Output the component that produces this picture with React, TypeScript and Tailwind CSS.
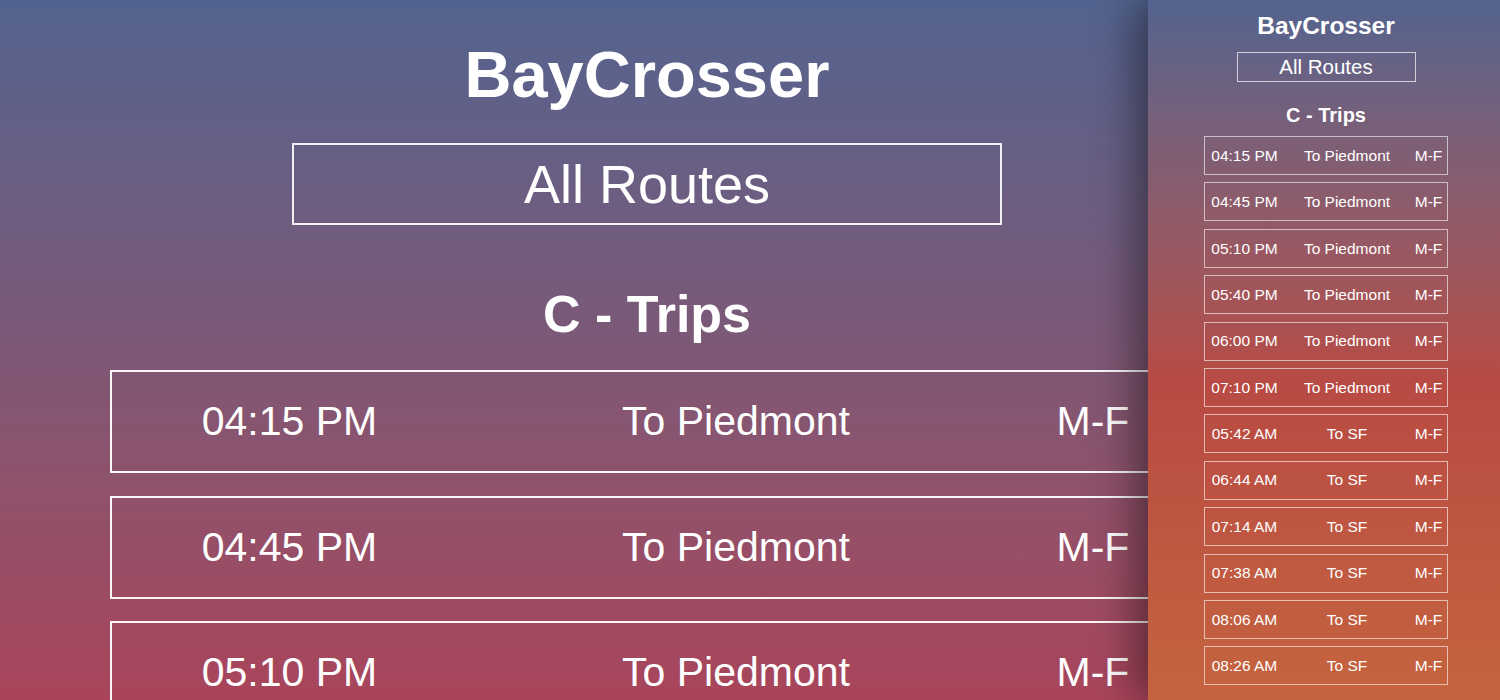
// BayCrosser trip list: wide view with a narrow preview panel on the right
import React from 'react';

type Trip = { time: string; dest: string; days: string };

const trips: Trip[] = [
  { time: '04:15 PM', dest: 'To Piedmont', days: 'M-F' },
  { time: '04:45 PM', dest: 'To Piedmont', days: 'M-F' },
  { time: '05:10 PM', dest: 'To Piedmont', days: 'M-F' },
  { time: '05:40 PM', dest: 'To Piedmont', days: 'M-F' },
  { time: '06:00 PM', dest: 'To Piedmont', days: 'M-F' },
  { time: '07:10 PM', dest: 'To Piedmont', days: 'M-F' },
  { time: '05:42 AM', dest: 'To SF', days: 'M-F' },
  { time: '06:44 AM', dest: 'To SF', days: 'M-F' },
  { time: '07:14 AM', dest: 'To SF', days: 'M-F' },
  { time: '07:38 AM', dest: 'To SF', days: 'M-F' },
  { time: '08:06 AM', dest: 'To SF', days: 'M-F' },
  { time: '08:26 AM', dest: 'To SF', days: 'M-F' },
];

const font = { fontFamily: '"Liberation Sans", Arial, Helvetica, sans-serif' };

function MainView() {
  return (
    <div className="flex-1 min-w-0 h-full overflow-hidden bg-linear-to-b from-[#52638f] via-[#7d5876] to-[#a9445a]">
      <div className="w-[1074px] ml-[110px] shrink-0 flex flex-col items-center pt-[42px] text-white">
        <h1 className="text-[65px] font-bold leading-none">BayCrosser</h1>

        {/* route picker */}
        <div className="mt-[36px] w-[710px] h-[82px] border-2 border-white/90 flex items-center justify-center">
          <span className="text-[54px] leading-none">All Routes</span>
        </div>

        <h2 className="mt-[63px] text-[52px] font-bold leading-none">C - Trips</h2>

        {/* trips, only the first three fit */}
        <div className="mt-[30px] w-full flex flex-col gap-[22.5px]">
          {trips.slice(0, 3).map((t, i) => (
            <div
              key={i}
              className="h-[103px] w-full border-2 border-white/95 grid grid-cols-[355px_538px_176px] items-center text-center text-[41px] leading-none"
            >
              <span>{t.time}</span>
              <span>{t.dest}</span>
              <span>{t.days}</span>
            </div>
          ))}
        </div>
      </div>
    </div>
  );
}

function Sidebar() {
  return (
    <div className="relative z-10 w-[352px] shrink-0 h-full overflow-hidden pl-[4px] shadow-[-12px_0_40px_rgba(0,0,0,0.45)] bg-linear-to-b from-[#52638f] via-[#b84a43] via-55% to-[#c5643e]">
      <div className="flex flex-col items-center pt-[14px] text-white">
        <h1 className="text-[24.5px] font-bold leading-none">BayCrosser</h1>

        <div className="mt-[13.5px] w-[179px] h-[30px] border border-white/70 flex items-center justify-center">
          <span className="text-[20.5px] leading-none">All Routes</span>
        </div>

        <h2 className="mt-[23px] text-[20px] font-bold leading-none">C - Trips</h2>

        <div className="mt-[11px] flex flex-col gap-[7.4px]">
          {trips.map((t, i) => (
            <div
              key={i}
              className="h-[39px] w-[244px] border border-white/60 grid grid-cols-[79px_126px_37px] items-center text-center text-[15.5px] leading-none"
            >
              <span>{t.time}</span>
              <span>{t.dest}</span>
              <span>{t.days}</span>
            </div>
          ))}
        </div>
      </div>
    </div>
  );
}

export default function App() {
  return (
    <div className="w-[1500px] h-[700px] flex overflow-hidden" style={font}>
      <MainView />
      <Sidebar />
    </div>
  );
}
